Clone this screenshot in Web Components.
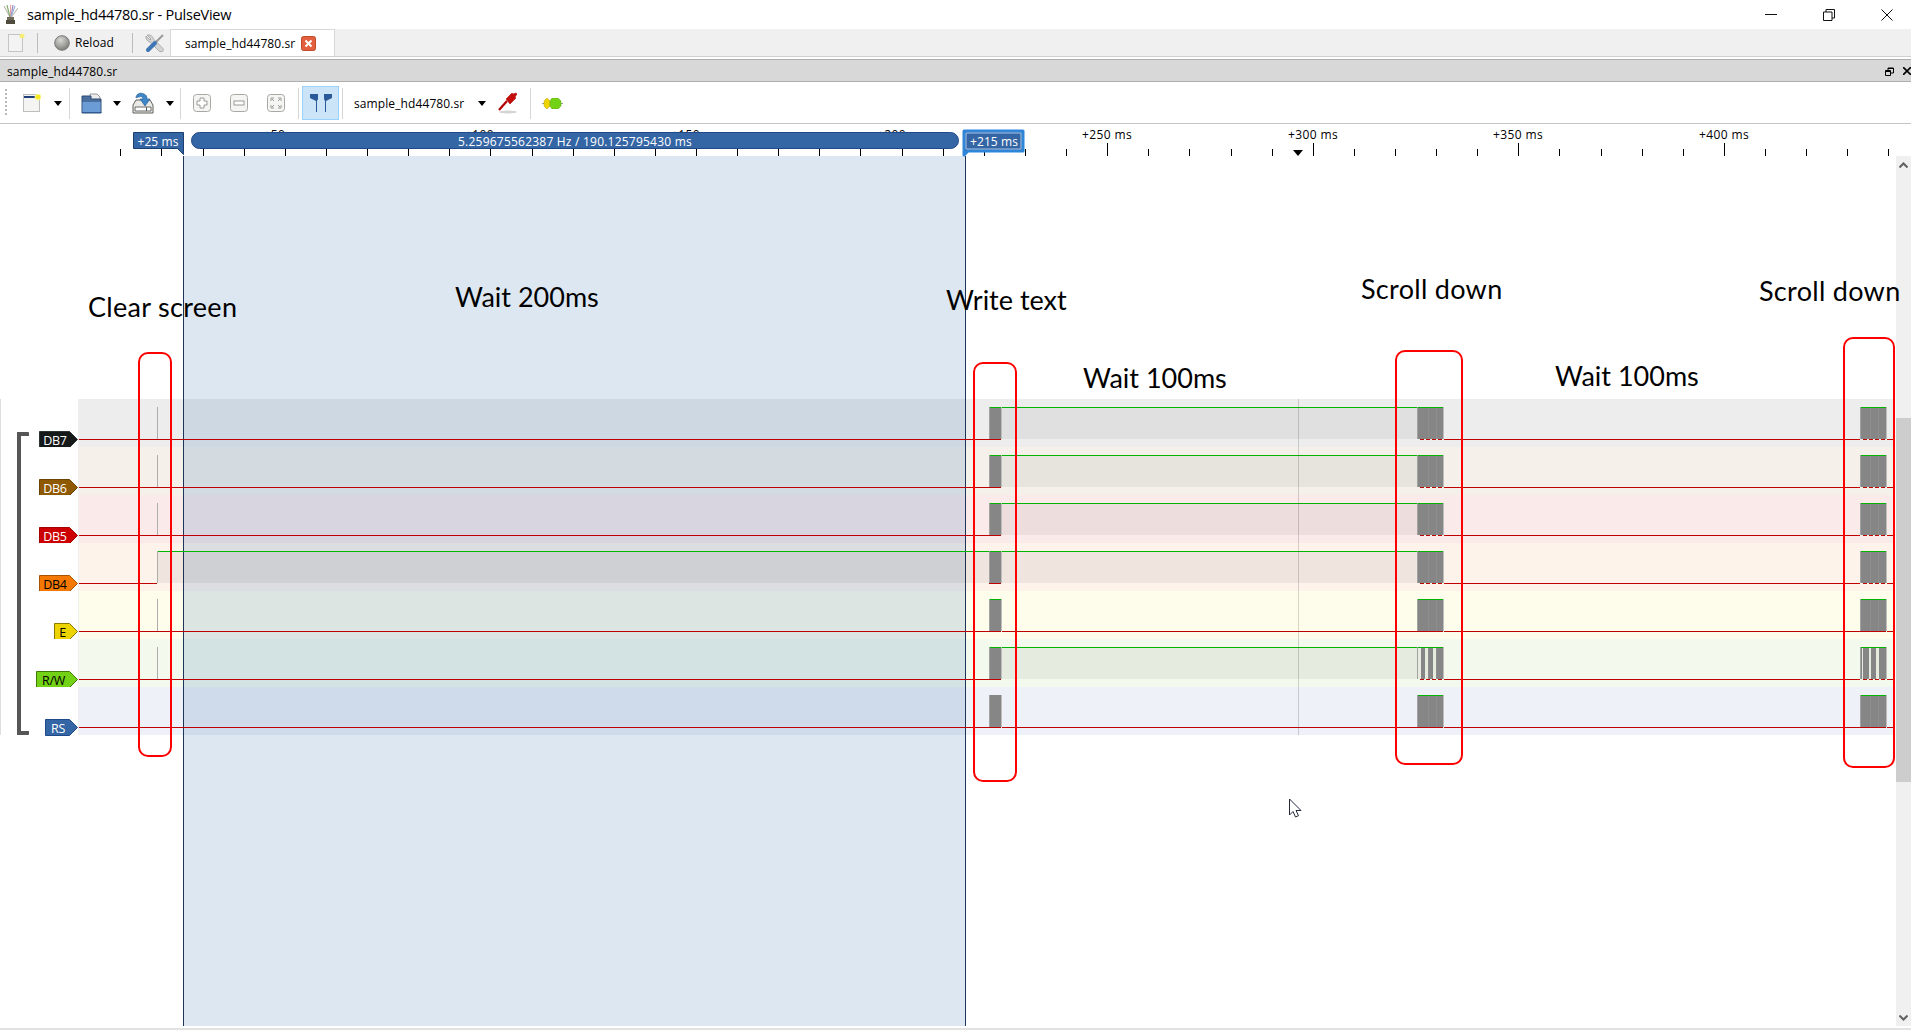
<!DOCTYPE html>
<html>
<head>
<meta charset="utf-8">
<title>sample_hd44780.sr - PulseView</title>
<style>
  html, body { margin: 0; padding: 0; height: 100%; overflow: hidden; background: #fff; }
  body { font-family: "Open Sans", "Liberation Sans", sans-serif; }
</style>
</head>
<body>
<pv-window>
  <pv-titlebar>sample_hd44780.sr - PulseView</pv-titlebar>
  <pv-tabbar>sample_hd44780.sr</pv-tabbar>
  <pv-docktitle>sample_hd44780.sr</pv-docktitle>
  <pv-toolbar>sample_hd44780.sr</pv-toolbar>
  <pv-view>
    <pv-ruler></pv-ruler>
    <pv-body>
      <pv-viewport>
        <pv-signal name="DB7" tag="#16191a" edge="#2e3436" ink="#fff" w="39" bg="#ededed" states="LLHLL" tick="1"></pv-signal>
        <pv-signal name="DB6" tag="#8f5902" edge="#6b4300" ink="#fff" w="39" bg="#f5f1ea" states="LLHLL" tick="1"></pv-signal>
        <pv-signal name="DB5" tag="#cc0000" edge="#a40000" ink="#fff" w="39" bg="#fbeaea" states="LLHLL" tick="1"></pv-signal>
        <pv-signal name="DB4" tag="#f57900" edge="#a85300" ink="#000" w="39" bg="#fef3eb" states="LHHLL" tick="1"></pv-signal>
        <pv-signal name="E" tag="#edd400" edge="#8a7a00" ink="#000" w="24" bg="#fefdeb" states="LLLLL" tick="1"></pv-signal>
        <pv-signal name="R/W" tag="#73d216" edge="#3f7a05" ink="#000" w="42" bg="#f3f9ec" states="LLHLL" tick="1" comb="1"></pv-signal>
        <pv-signal name="RS" tag="#3465a4" edge="#204a87" ink="#fff" w="33" bg="#eef1f7" states="LLLLL" tick="0" nogreen="1"></pv-signal>
        <pv-bracket></pv-bracket>
        <pv-cursors></pv-cursors>
        <pv-marker></pv-marker>
        <pv-note x="88" y="288" ls="0.3">Clear screen</pv-note>
        <pv-note x="455" y="278">Wait 200ms</pv-note>
        <pv-note x="946" y="281">Write text</pv-note>
        <pv-note x="1361" y="270" ls="0.3">Scroll down</pv-note>
        <pv-note x="1759" y="272" ls="0.3">Scroll down</pv-note>
        <pv-note x="1083" y="359">Wait 100ms</pv-note>
        <pv-note x="1555" y="357">Wait 100ms</pv-note>
        <pv-box x="138" y="352" w="34" h="405"></pv-box>
        <pv-box x="973" y="362" w="44" h="420"></pv-box>
        <pv-box x="1395" y="350" w="68" h="415"></pv-box>
        <pv-box x="1843" y="337" w="52" h="431"></pv-box>
        <pv-pointer></pv-pointer>
      </pv-viewport>
      <pv-scrollbar></pv-scrollbar>
    </pv-body>
  </pv-view>
</pv-window>

<script>
function makeTemplate(html) {
  const templateElement = document.createElement('template');
  templateElement.innerHTML = html;
  return templateElement;
}

class ShadowElement extends HTMLElement {
  constructor() {
    super();
    this.attachShadow({ mode: 'open' });
    this.shadowRoot.appendChild(this.constructor.template.content.cloneNode(true));
  }
}

const arrowIcon = '<svg width="8" height="5" viewBox="0 0 8 5"><path d="M0 0h8L4 5z" fill="#000"/></svg>';

class PvWindow extends ShadowElement {
  static template = makeTemplate(`
    <style>
      :host { display: flex; flex-direction: column; height: 1030px; width: 1911px; overflow: hidden; background: #fff; }
      .foot { height: 4px; flex: none; background: linear-gradient(#fff 2px, #e2e2e2 2px); }
    </style>
    <slot></slot>
    <div class="foot"></div>`);
}

class PvTitlebar extends ShadowElement {
  static template = makeTemplate(`
    <style>
      :host { display: flex; align-items: center; height: 29px; flex: none; background: #fff; font-size: 14.5px; color: #000; letter-spacing: -0.25px; }
      .logo { margin: 0 9px 0 3px; display: block; }
      .title { flex: 1; }
      .btns { display: flex; align-items: center; gap: 12px; margin-right: 1px; }
      .btn { width: 46px; height: 29px; display: flex; align-items: center; justify-content: center; }
    </style>
    <svg class="logo" width="15" height="20" viewBox="0 0 15 20">
      <g fill="none" stroke-width="1.1">
        <path d="M7 12L1 1" stroke="#b9b6a5"/><path d="M7 12L4 0" stroke="#7ea96c"/><path d="M7.500 12V0" stroke="#e6a0a0"/>
        <path d="M8 12L10 0" stroke="#9a7fb5"/><path d="M8 12L12 1" stroke="#8fb4d8"/><path d="M8.500 12L15 3" stroke="#c0bdb0"/>
      </g>
      <path d="M4 12h7v3H4z" fill="#6f6a58"/><path d="M3 15h9v4H3z" fill="#4f4b3e"/>
    </svg>
    <span class="title"><slot></slot></span>
    <div class="btns">
      <div class="btn"><svg width="12" height="2"><rect width="12" height="1" fill="#111"/></svg></div>
      <div class="btn"><svg width="12" height="12" viewBox="0 0 12 12"><path d="M.5 3h8.500v8.500H.5zM3 3V.5h8.500V9H9" fill="none" stroke="#111"/></svg></div>
      <div class="btn"><svg width="12" height="12" viewBox="0 0 12 12"><path d="M.5.5l11 11M11.500.5l-11 11" stroke="#111" fill="none"/></svg></div>
    </div>`);
}

class PvTabbar extends ShadowElement {
  static template = makeTemplate(`
    <style>
      :host { display: flex; align-items: stretch; height: 27px; flex: none; background: #f0f0f0; font-size: 12px; color: #000; letter-spacing: 0.1px; border-bottom: 1px solid #cfcfcf; }
      .item { display: flex; align-items: center; }
      svg.item { display: block; align-self: center; }
      .sep { width: 1px; height: 20px; background: #bcbcbc; align-self: center; }
      .tab { display: flex; align-items: center; background: #fff; margin-left: 5px; width: 165px; box-sizing: border-box; padding-left: 14px; border: 1px solid #d8d8d8; border-bottom: 0; }
      .close { margin-left: 6px; display: block; }
    </style>
    <svg class="item" style="margin-left:8px" width="17" height="20" viewBox="0 0 17 20">
      <rect x=".5" y="1.500" width="14" height="17" fill="#f3f3f3" stroke="#c4c4c4"/><circle cx="14" cy="3" r="2.500" fill="#f5ec7a"/>
    </svg>
    <div class="sep" style="margin-left:12px"></div>
    <svg class="item" style="margin-left:16px" width="16" height="16" viewBox="0 0 16 16">
      <defs><radialGradient id="rl" cx=".4" cy=".3" r=".8"><stop offset="0" stop-color="#d8d8d4"/><stop offset="1" stop-color="#73736e"/></radialGradient></defs>
      <circle cx="8" cy="8" r="7.300" fill="url(#rl)" stroke="#777"/>
    </svg>
    <span class="item" style="margin-left:5px;width:57px">Reload</span>
    <div class="sep"></div>
    <svg class="item" style="margin-left:12px" width="20" height="20" viewBox="0 0 20 20">
      <path d="M2 2l4 4-1 1L1 3a5 5 0 0 0 4 6l9 9c1 1 3 1 4 0 .7-1 .5-2-.5-3l-9-9a5 5 0 0 0-6-4z" fill="#d4d4d4" stroke="#a0a0a0" stroke-width=".8"/>
      <path d="M10 10l8-8" stroke="#9a9a9a" stroke-width="2" fill="none"/>
      <path d="M3 17l7-7" stroke="#3f76b5" stroke-width="4" stroke-linecap="round" fill="none"/>
    </svg>
    <div class="tab">
      <span><slot></slot></span>
      <svg class="close" width="15" height="15" viewBox="0 0 15 15">
        <rect x=".5" y=".5" width="14" height="14" rx="2" fill="#e2603f" stroke="#c0492c"/>
        <path d="M4.500 4.500l6 6M10.500 4.500l-6 6" stroke="#fff" stroke-width="2"/>
      </svg>
    </div>`);
}

class PvDocktitle extends ShadowElement {
  static template = makeTemplate(`
    <style>
      :host { display: flex; align-items: center; height: 20px; padding-top: 1px; flex: none; margin-top: 2px; background: #d8d8d8; border-top: 1px solid #aeaeae; border-bottom: 1px solid #aeaeae; font-size: 12px; color: #000; padding-left: 7px; letter-spacing: 0.1px; }
      span { flex: 1; }
      svg { display: block; }
    </style>
    <span><slot></slot></span>
    <svg width="9" height="9" viewBox="0 0 9 9"><path d="M.5 3.500h5v5h-5zM3 3.500V1h5.500v5h-3" fill="none" stroke="#000"/><path d="M3 1.500h5.500M.5 4.500h5" stroke="#000"/></svg>
    <svg style="margin-left:9px" width="8" height="8" viewBox="0 0 8 8"><path d="M0 0l8 8M8 0L0 8" stroke="#000" stroke-width="1.600"/></svg>`);
}

class PvToolbar extends ShadowElement {
  static template = makeTemplate(`
    <style>
      :host { display: flex; align-items: center; height: 40px; padding-top: 1px; flex: none; background: #fff; border-bottom: 1px solid #c4c4c4; font-size: 12px; color: #000; letter-spacing: 0.1px; }
      svg { display: block; flex: none; }
      .sep { width: 1px; height: 31px; background: #d6d6d6; flex: none; }
      .active { width: 37px; height: 34px; box-sizing: border-box; background: #cce4f7; border: 1px solid #99d1ff; margin-left: 3px; display: flex; align-items: center; justify-content: center; flex: none; }
      .name { width: 112px; margin-left: 11px; flex: none; white-space: nowrap; }
    </style>
    <svg style="margin-left:5px" width="3" height="30" viewBox="0 0 3 30"><path d="M1 1v28" stroke="#b8b8b8" stroke-width="2" stroke-dasharray="2 2" fill="none"/></svg>
    <svg style="margin-left:15px" width="18" height="18" viewBox="0 0 18 18">
      <rect x=".5" y=".5" width="16" height="17" fill="#f4f4f2" stroke="#bdbdbd"/><rect x="1" y="2" width="12" height="2" fill="#1f3f7a"/>
      <circle cx="15" cy="3" r="3" fill="#f6e92a" stroke="#fbf6a0"/>
    </svg>
    <span style="margin-left:13px">${arrowIcon}</span>
    <div class="sep" style="margin-left:7px"></div>
    <svg style="margin-left:11px" width="21" height="21" viewBox="0 0 21 21">
      <path d="M9 1h7l3 3v6H9z" fill="#ececec" stroke="#9a9a9a"/><path d="M1 3h9v3h10v14H1z" fill="#4a6f9e" stroke="#2f4c73"/>
      <path d="M1.500 9h18v10.500h-18z" fill="#6b9cd6"/><path d="M1 19.500h19.500" stroke="#2f5a94"/>
    </svg>
    <span style="margin-left:11px">${arrowIcon}</span>
    <svg style="margin-left:11px" width="22" height="22" viewBox="0 0 22 22">
      <path d="M1 13l3-5h14l3 5v8H1z" fill="#e9e9e6" stroke="#5f5f5a"/><path d="M3 15h16v4H3z" fill="#fff" stroke="#6d6d68"/><path d="M14 15h1v4h-1z" fill="#555"/>
      <path d="M4 6c0-4 4-6 8-4 2 1 3 2 3 5h3l-5 7-5-7h3c0-2-2-3-4-2-2 0-3 1-3 1z" fill="#3f86c6" stroke="#2a5f95" stroke-width=".7"/>
    </svg>
    <span style="margin-left:12px">${arrowIcon}</span>
    <div class="sep" style="margin-left:6px"></div>
    <svg style="margin-left:12px" width="18" height="18" viewBox="0 0 18 18">
      <rect x=".5" y=".5" width="17" height="17" rx="3" fill="#f5f5f3" stroke="#a8a8a4"/><path d="M7 4h4v3h3v4h-3v3H7v-3H4V7h3z" fill="#fff" stroke="#9a9a96"/>
    </svg>
    <svg style="margin-left:19px" width="18" height="18" viewBox="0 0 18 18">
      <rect x=".5" y=".5" width="17" height="17" rx="3" fill="#f5f5f3" stroke="#a8a8a4"/><rect x="4" y="7" width="10" height="4" fill="#fff" stroke="#9a9a96"/>
    </svg>
    <svg style="margin-left:19px" width="18" height="18" viewBox="0 0 18 18">
      <rect x=".5" y=".5" width="17" height="17" rx="3" fill="#f5f5f3" stroke="#a8a8a4"/>
      <path d="M4 7V4h3M11 4h3v3M14 11v3h-3M7 14H4v-3M7 7L5 5M11 7l2-2M11 11l2 2M7 11l-2 2" fill="none" stroke="#9a9a96"/>
    </svg>
    <div class="sep" style="margin-left:13px"></div>
    <div class="active">
      <svg width="23" height="18" viewBox="0 0 23 18">
        <path d="M1 0h8v5l-1 2v11H7V7L1 4z" fill="#2a5a98"/>
        <path d="M23 0h-8v5l1 2v11h1V7l6-3z" fill="#2a5a98"/>
      </svg>
    </div>
    <div class="sep" style="margin-left:3px"></div>
    <span class="name"><slot></slot></span>
    <span style="margin-left:12px">${arrowIcon}</span>
    <svg style="margin-left:12px" width="20" height="22" viewBox="0 0 20 22">
      <ellipse cx="10" cy="20" rx="9" ry="1.500" fill="#d4d4d4"/>
      <path d="M1 18L9 9" stroke="#b30000" stroke-width="2.200"/>
      <path d="M8 7l6-6 1 1 3-1 1 1-2 3 1 1-6 6z" fill="#c60b0b" stroke="#920000" stroke-width=".5"/>
    </svg>
    <div class="sep" style="margin-left:12px"></div>
    <svg style="margin-left:11px" width="21" height="11" viewBox="0 0 21 11">
      <path d="M0 5.500h21" stroke="#9a9a9a"/>
      <path d="M5 0l3 3v5l-3 3-3-3V3z" fill="#edd400" stroke="#c4a000" stroke-width=".5"/>
      <path d="M10 0h6l3 3v5l-3 3h-6L8 8V3z" fill="#73d216" stroke="#5ca60f" stroke-width=".5"/>
    </svg>`);
}

class PvView extends ShadowElement {
  static template = makeTemplate(`
    <style>:host { display: flex; flex-direction: column; flex: 1; min-height: 0; }</style>
    <slot></slot>`);
}

class PvRuler extends ShadowElement {
  static template = makeTemplate(`
    <style>
      :host { display: block; height: 32px; flex: none; position: relative; z-index: 4; }
      svg { display: block; position: absolute; left: 0; top: 0; overflow: visible; }
      .lbl { font: 12px "Open Sans", "Liberation Sans", sans-serif; letter-spacing: 0.4px; fill: #000; text-anchor: middle; }
      .flag { font: 12px "Open Sans", "Liberation Sans", sans-serif; letter-spacing: 0.1px; fill: #fff; text-anchor: middle; }
      .freq { letter-spacing: 0.22px; }
    </style>
    <svg width="1896" height="34" viewBox="0 124 1896 34" shape-rendering="crispEdges"></svg>`);

  connectedCallback() {
    const svg = this.shadowRoot.querySelector('svg');
    let out = '';
    const step = 41.12;
    for (let i = 0; i < 44; i++) {
      const x = Math.round(120.3 + i * step);
      const major = (i - 4) % 5 === 0;
      out += `<rect x="${x}" y="${major ? 143 : 149}" width="1" height="${major ? 13 : 7}" fill="#000"/>`;
      if (major) {
        const ms = 50 + ((i - 4) / 5) * 50;
        out += `<text class="lbl" x="${x}" y="139" shape-rendering="auto">+${ms} ms</text>`;
      }
    }
    // trigger position
    out += '<path d="M1293 150h10l-5 6z" fill="#000" shape-rendering="auto"/>';
    // cursor pill
    out += `<rect x="191.500" y="132.500" width="767" height="16" rx="8" fill="#3465a4" stroke="#204a87" shape-rendering="auto"/>
      <text class="flag freq" x="575" y="146" shape-rendering="auto">5.259675562387 Hz / 190.125795430 ms</text>`;
    // +25 ms flag
    out += `<path d="M133.500 132.500h50v22l-6-6h-44z" fill="#3465a4" stroke="#1d3f70" shape-rendering="auto"/>
      <text class="flag" x="158" y="146" shape-rendering="auto">+25 ms</text>`;
    // +215 ms flag, highlighted
    out += `<path d="M964 131h59v20h-55l-4 4z" fill="#3465a4" stroke="#2f86d8" stroke-width="3" stroke-linejoin="round" shape-rendering="auto"/>
      <path d="M966 133h55v16h-55z" fill="none" stroke="#a9c4e4" shape-rendering="auto"/>
      <text class="flag" x="994" y="146" shape-rendering="auto">+215 ms</text>`;
    svg.innerHTML = out;
  }
}

class PvBody extends ShadowElement {
  static template = makeTemplate(`
    <style>:host { display: flex; flex: 1; min-height: 0; }</style>
    <slot></slot>`);
}

class PvViewport extends ShadowElement {
  static template = makeTemplate(`
    <style>:host { display: block; flex: 1; min-width: 0; position: relative; padding-top: 243px; box-sizing: border-box; }</style>
    <slot></slot>`);
}

class PvSignal extends ShadowElement {
  static template = makeTemplate(`
    <style>
      :host { display: flex; height: 48px; width: 1894px; }
      .head { width: 79px; flex: none; box-sizing: border-box; background: #fff; border-left: 1px solid #dedede; border-right: 1px solid #efefef; display: flex; justify-content: flex-end; align-items: flex-start; padding-top: 32px; }
      .trace { display: block; flex: none; position: relative; z-index: 2; }
      text { font: 12.5px "Open Sans", "Liberation Sans", sans-serif; letter-spacing: -0.3px; }
      .head svg { display: block; }
    </style>
    <div class="head"></div>
    <svg class="trace" width="1815" height="48" viewBox="79 0 1815 48" shape-rendering="crispEdges"></svg>`);

  connectedCallback() {
    const a = n => this.getAttribute(n);
    this.style.background = a('bg');
    const w = +a('w');
    this.shadowRoot.querySelector('.head').innerHTML =
      `<svg width="${w}" height="17" viewBox="0 0 ${w} 17">
        <path d="M.5 .5H${w - 8.5}L${w - .5} 8.500 ${w - 8.5} 16.500H.500z" fill="${a('tag')}" stroke="${a('edge')}"/>
        <text x="${(w - 7) / 2}" y="14" text-anchor="middle" fill="${a('ink')}">${a('name')}</text>
      </svg>`;

    const red = '#bf0000', green = '#00b400', gray = '#868686';
    const gaps = [[79, 157], [157, 989], [1002, 1417], [1444, 1860], [1887, 1894]];
    const states = a('states');
    let out = '';
    gaps.forEach(([x0, x1], i) => {
      if (states[i] === 'H') {
        out += `<rect x="${x0}" y="9" width="${x1 - x0}" height="31" fill="rgba(0,0,0,0.055)"/>`;
        out += `<rect x="${x0}" y="8" width="${x1 - x0}" height="1" fill="${green}"/>`;
      } else {
        out += `<rect x="${x0}" y="40" width="${x1 - x0}" height="1" fill="${red}"/>`;
      }
    });
    if (a('tick') === '1') out += '<rect x="157" y="8" width="1" height="32" fill="#adadad"/>';

    const bursts = [[989, 1002, []], [1417, 1444, [1428, 1436]], [1860, 1887, [1870, 1878]]];
    const combs = [[], [[1418, 1421], [1425, 1428], [1433, 1436]], [[1862, 1863], [1869, 1871], [1876, 1879]]];
    bursts.forEach(([x0, x1, soft], i) => {
      out += `<rect x="${x0}" y="8" width="${x1 - x0}" height="32" fill="${gray}"/>`;
      soft.forEach(x => { out += `<rect x="${x}" y="8" width="1" height="32" fill="#8e8e8e"/>`; });
      out += `<rect x="${x0}" y="8" width="1" height="32" fill="#a2a2a2"/>`;
      out += `<rect x="${x1 - 1}" y="8" width="1" height="32" fill="#bdbdb9"/>`;
      if (a('comb')) combs[i].forEach(([c0, c1]) => { out += `<rect x="${c0}" y="8" width="${c1 - c0}" height="32" fill="#e6ebdf"/>`; });
      if (!(a('nogreen') && i === 0)) out += `<rect x="${x0 + 1}" y="8" width="${x1 - x0 - 2}" height="1" fill="${green}"/>`;
      // the low level only shows through the burst in places
      const solid = states[i + 1] === 'L' && states[i] === 'L' && i !== 0;
      if (solid || i === 0) {
        out += `<rect x="${x0}" y="40" width="${x1 - x0 - 1}" height="1" fill="${red}"/>`;
      } else {
        for (let x = x0 + 3; x < x1 - 1; x += 6) out += `<rect x="${x}" y="40" width="4" height="1" fill="${red}"/>`;
      }
    });
    this.shadowRoot.querySelector('.trace').innerHTML = out;
  }
}

class PvBracket extends ShadowElement {
  static template = makeTemplate(`
    <style>
      :host { display: block; position: absolute; left: 17px; top: 276px; width: 8px; height: 295px; border: 4px solid #565656; border-right: 0; border-radius: 1px; z-index: 3; }
    </style>`);
}

class PvCursors extends ShadowElement {
  static template = makeTemplate(`
    <style>
      :host { display: block; position: absolute; left: 183px; top: 0; width: 781px; height: 870px; background: rgba(52,110,180,0.17); border-left: 1px solid #1d3558; border-right: 1px solid #1d3558; z-index: 1; }
    </style>`);
}

class PvMarker extends ShadowElement {
  static template = makeTemplate(`
    <style>
      :host { display: block; position: absolute; left: 1298px; top: 243px; width: 1px; height: 336px; background: rgba(0,0,0,0.16); z-index: 2; }
    </style>`);
}

class PvNote extends ShadowElement {
  static template = makeTemplate(`
    <style>
      :host { display: block; position: absolute; z-index: 5; font: 27px/38px Lato, "Liberation Sans", sans-serif; color: #000; white-space: nowrap; }
    </style>
    <slot></slot>`);

  connectedCallback() {
    this.style.left = this.getAttribute('x') + 'px';
    this.style.top = (+this.getAttribute('y') - 156) + 'px';
    if (this.hasAttribute('ls')) this.style.letterSpacing = this.getAttribute('ls') + 'px';
  }
}

class PvBox extends ShadowElement {
  static template = makeTemplate(`
    <style>
      :host { display: block; position: absolute; z-index: 5; box-sizing: border-box; border: 2.500px solid #f00; border-radius: 10px; }
    </style>`);

  connectedCallback() {
    const a = n => this.getAttribute(n);
    this.style.left = a('x') + 'px';
    this.style.top = (+a('y') - 156) + 'px';
    this.style.width = a('w') + 'px';
    this.style.height = a('h') + 'px';
  }
}

class PvPointer extends ShadowElement {
  static template = makeTemplate(`
    <style>
      :host { display: block; position: absolute; left: 1288px; top: 642px; z-index: 6; }
      svg { display: block; }
    </style>
    <svg width="14" height="20" viewBox="0 0 14 20">
      <path d="M1.500 1v16l3.500-3.500 2.500 5.500 3-1.300L8 12.500h5z" fill="#fff" stroke="#23283a"/>
    </svg>`);
}

class PvScrollbar extends ShadowElement {
  static template = makeTemplate(`
    <style>
      :host { display: flex; flex-direction: column; width: 15px; flex: none; background: #f0f0f0; }
      .arrow { height: 17px; display: flex; align-items: center; justify-content: center; flex: none; }
      .gap { height: 245px; flex: none; }
      .thumb { height: 364px; flex: none; background: #cdcdcd; }
      .rest { flex: 1; }
      svg { display: block; }
    </style>
    <div class="arrow"><svg width="9" height="6" viewBox="0 0 9 6"><path d="M.5 5.500l4-4 4 4" fill="none" stroke="#606060" stroke-width="2"/></svg></div>
    <div class="gap"></div>
    <div class="thumb"></div>
    <div class="rest"></div>
    <div class="arrow"><svg width="9" height="6" viewBox="0 0 9 6"><path d="M.5 .5l4 4 4-4" fill="none" stroke="#606060" stroke-width="2"/></svg></div>`);
}

customElements.define('pv-window', PvWindow);
customElements.define('pv-titlebar', PvTitlebar);
customElements.define('pv-tabbar', PvTabbar);
customElements.define('pv-docktitle', PvDocktitle);
customElements.define('pv-toolbar', PvToolbar);
customElements.define('pv-view', PvView);
customElements.define('pv-ruler', PvRuler);
customElements.define('pv-body', PvBody);
customElements.define('pv-viewport', PvViewport);
customElements.define('pv-signal', PvSignal);
customElements.define('pv-bracket', PvBracket);
customElements.define('pv-cursors', PvCursors);
customElements.define('pv-marker', PvMarker);
customElements.define('pv-note', PvNote);
customElements.define('pv-box', PvBox);
customElements.define('pv-pointer', PvPointer);
customElements.define('pv-scrollbar', PvScrollbar);
</script>
</body>
</html>
